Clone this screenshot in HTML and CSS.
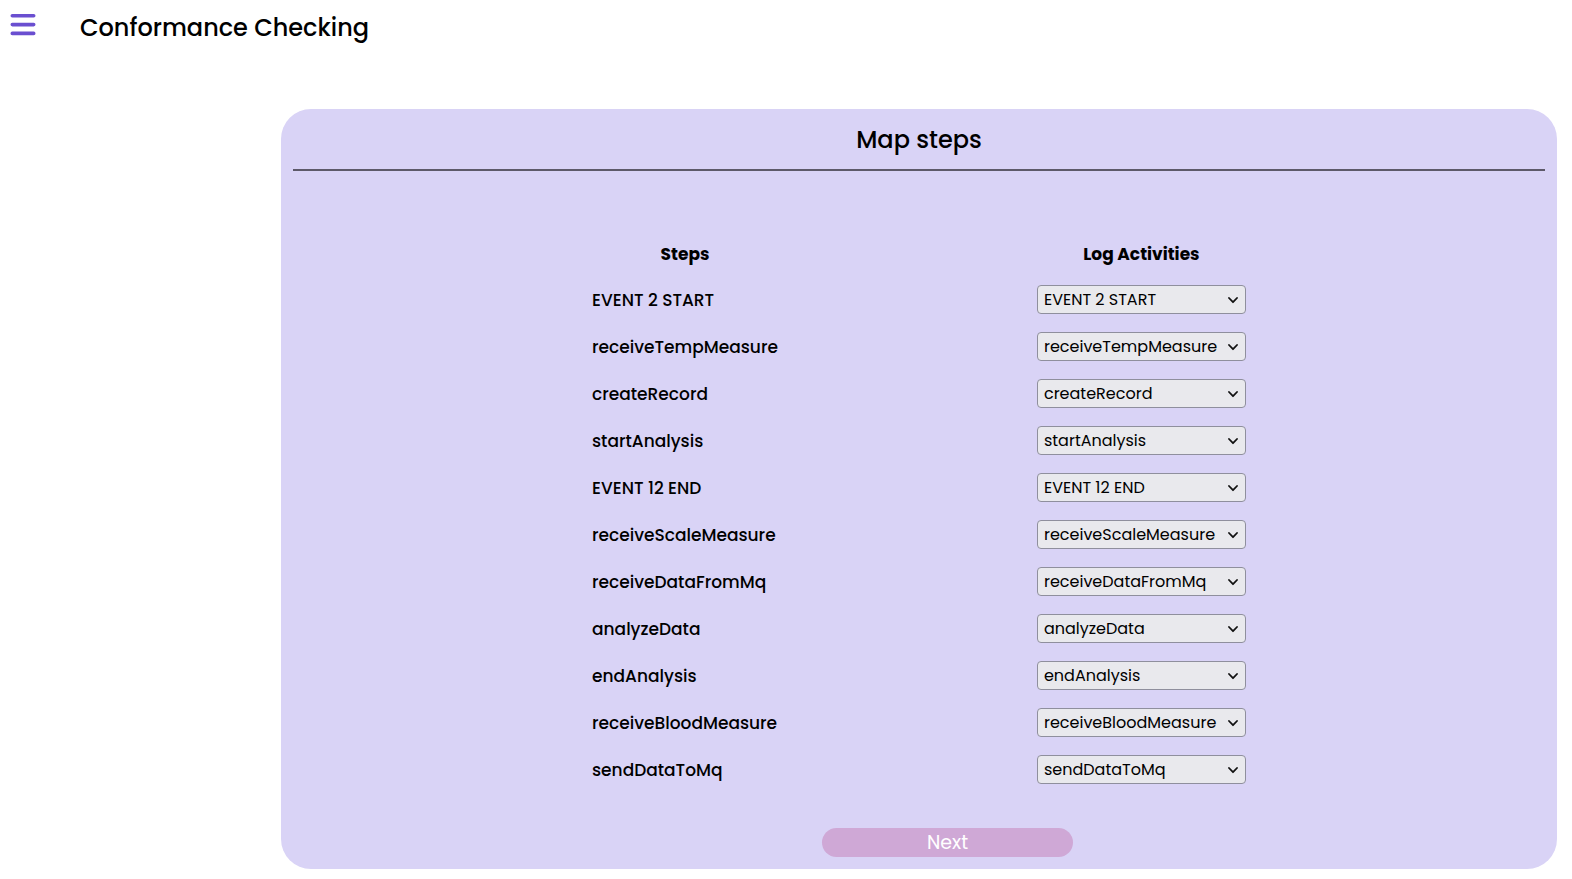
FILE: index.html
```html
<!DOCTYPE html>
<html lang="en">
<head>
<meta charset="utf-8">
<meta name="viewport" content="width=device-width, initial-scale=1">
<title>Conformance Checking</title>
<link rel="stylesheet" href="styles.css">
</head>
<body>
<header class="topbar">
  <button class="menu-button" type="button" aria-label="Open menu">
    <svg class="menu-icon" viewBox="0 0 25 22" aria-hidden="true"><path d="M1.8 1.8H23.2M1.8 10.6H23.2M1.8 19.4H23.2"/></svg>
  </button>
  <h1 class="page-title">Conformance Checking</h1>
</header>
<main class="card">
  <h2 class="card-title">Map steps</h2>
  <form class="map-form">
    <table class="map-table">
      <thead><tr><th class="step-col" scope="col">Steps</th><th scope="col">Log Activities</th></tr></thead>
      <tbody id="rows"></tbody>
    </table>
    <button class="next-button" type="button">Next</button>
  </form>
</main>
<script src="script.js"></script>
</body>
</html>
```
FILE: styles.css
```css
* {
  box-sizing: border-box;
}

body {
  margin: 0;
  background: #fff;
  color: #000;
  font-family: Poppins, Inter, "Liberation Sans", sans-serif;
  font-size: 17px;
  line-height: 24px;
}

.topbar {
  display: flex;
  align-items: flex-start;
  gap: 44px;
  height: 109px;
  padding: 10px;
}

.menu-button {
  padding: 4px 0;
  border: 0;
  background: none;
  cursor: pointer;
}

.menu-icon {
  display: block;
  width: 26px;
  height: 22px;
  fill: none;
  stroke: #6a4fd0;
  stroke-width: 3.6;
  stroke-linecap: round;
}

.page-title,
.card-title {
  margin: 0;
  font-size: 24px;
  font-weight: 500;
  line-height: 36px;
}

.card {
  margin: 0 15px 10px 281px;
  padding: 12px;
  border-radius: 30px;
  background: #d9d3f6;
}

.card-title {
  padding: 1px 0 11px;
  border-bottom: 2px solid #5d5969;
  text-align: center;
}

.map-form {
  display: flex;
  flex-direction: column;
  align-items: center;
  padding-top: 60px;
}

.map-table {
  border-collapse: collapse;
  font-weight: 500;
}

.map-table th,
.map-table td {
  height: 47px;
  padding: 0;
}

.map-table th {
  font-weight: 700;
  height: 45px;
}

.map-table .step-col {
  padding-right: 259px;
}

.select-box {
  display: block;
  position: relative;
  width: 209px;
}

.activity-select {
  appearance: none;
  display: block;
  width: 100%;
  height: 29px;
  padding: 0 24px 0 6px;
  border: 1px solid #8f8f9d;
  border-radius: 4px;
  background: #e9e9ed;
  color: #000;
  font-family: inherit;
  font-size: 16px;
  font-weight: 400;
}

.chevron {
  position: absolute;
  top: 11px;
  right: 8px;
  width: 10px;
  height: 8px;
  fill: none;
  stroke: #111;
  stroke-width: 1.8;
  stroke-linecap: round;
  stroke-linejoin: round;
  pointer-events: none;
}

.next-button {
  width: 251px;
  height: 29px;
  margin: 35px 0 0 57px;
  padding: 0;
  border: 0;
  border-radius: 15px;
  background: #cfa8d6;
  color: #fff;
  font-family: inherit;
  font-size: 19px;
  line-height: 29px;
}
```
FILE: script.js
```javascript
const steps = [
  "EVENT 2 START", "receiveTempMeasure", "createRecord", "startAnalysis",
  "EVENT 12 END", "receiveScaleMeasure", "receiveDataFromMq", "analyzeData",
  "endAnalysis", "receiveBloodMeasure", "sendDataToMq"
];

document.getElementById("rows").innerHTML = steps.map((step, i) => `
  <tr>
    <td class="step-col"><label for="activity-${i}">${step}</label></td>
    <td>
      <span class="select-box">
        <select class="activity-select" id="activity-${i}">
          ${steps.map((name) => `<option${name === step ? " selected" : ""}>${name}</option>`).join("")}
        </select>
        <svg class="chevron" viewBox="0 0 10 8" aria-hidden="true"><path d="M1 2L5 6.2L9 2"/></svg>
      </span>
    </td>
  </tr>`).join("");
```
